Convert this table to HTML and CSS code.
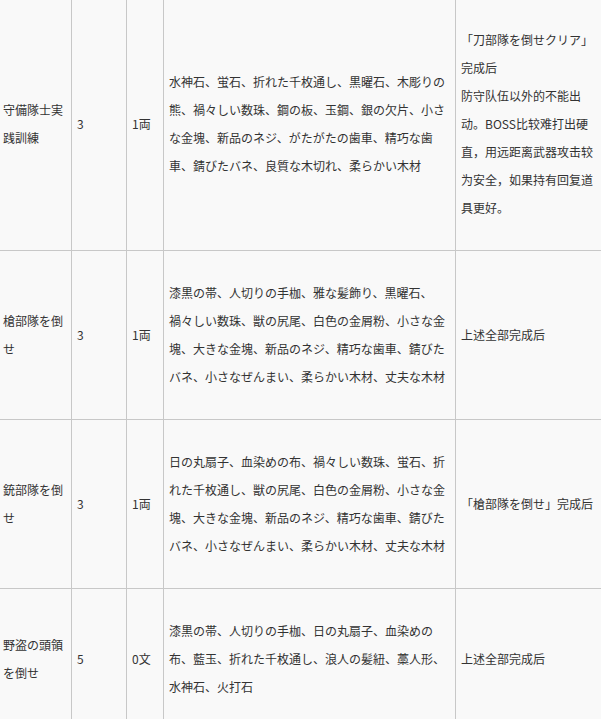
FILE: index.html
```html
<!DOCTYPE html>
<html lang="ja">
<head>
<meta charset="utf-8">
<title>任務一覧</title>
<link rel="stylesheet" href="styles.css">
</head>
<body>
<table class="quests">
  <colgroup>
    <col class="c-name">
    <col class="c-num">
    <col class="c-cost">
    <col class="c-mat">
    <col class="c-cond">
  </colgroup>
  <tbody>
    <tr>
      <td>守備隊士実践訓練</td>
      <td>3</td>
      <td>1両</td>
      <td>水神石、蛍石、折れた千枚通し、黒曜石、木彫りの熊、禍々しい数珠、鋼の板、玉鋼、銀の欠片、小さな金塊、新品のネジ、がたがたの歯車、精巧な歯車、錆びたバネ、良質な木切れ、柔らかい木材</td>
      <td lang="zh-CN">「刀部隊を倒せクリア」完成后<br>防守队伍以外的不能出动。BOSS比较难打出硬直，用远距离武器攻击较为安全，如果持有回复道具更好。</td>
    </tr>
    <tr>
      <td>槍部隊を倒せ</td>
      <td>3</td>
      <td>1両</td>
      <td>漆黒の帯、人切りの手枷、雅な髪飾り、黒曜石、禍々しい数珠、獣の尻尾、白色の金屑粉、小さな金塊、大きな金塊、新品のネジ、精巧な歯車、錆びたバネ、小さなぜんまい、柔らかい木材、丈夫な木材</td>
      <td lang="zh-CN">上述全部完成后</td>
    </tr>
    <tr>
      <td>銃部隊を倒せ</td>
      <td>3</td>
      <td>1両</td>
      <td>日の丸扇子、血染めの布、禍々しい数珠、蛍石、折れた千枚通し、獣の尻尾、白色の金屑粉、小さな金塊、大きな金塊、新品のネジ、精巧な歯車、錆びたバネ、小さなぜんまい、柔らかい木材、丈夫な木材</td>
      <td lang="zh-CN">「槍部隊を倒せ」完成后</td>
    </tr>
    <tr>
      <td>野盗の頭領を倒せ</td>
      <td>5</td>
      <td>0文</td>
      <td>漆黒の帯、人切りの手枷、日の丸扇子、血染めの布、藍玉、折れた千枚通し、浪人の髪紐、藁人形、水神石、火打石</td>
      <td lang="zh-CN">上述全部完成后</td>
    </tr>
  </tbody>
</table>
</body>
</html>
```

FILE: styles.css
```css
html, body {
  margin: 0;
  padding: 0;
  background: #f9f9f9;
}

body {
  font-family: "Noto Sans CJK JP", "Noto Sans", sans-serif;
  font-size: 12px;
  color: #333;
  overflow: hidden;
}

.quests {
  border-collapse: collapse;
  table-layout: fixed;
  width: 606px;
  margin: -3px 0 0 -3px;
  background: #f9f9f9;
}

.c-name { width: 74px; }
.c-num  { width: 55px; }
.c-cost { width: 37px; }
.c-mat  { width: 292px; }
.c-cond { width: 148px; }

.quests td {
  border: 1px solid #c8c8c8;
  padding: 28px 5px;
  line-height: 28px;
  vertical-align: middle;
  text-align: left;
  word-break: normal;
  line-break: strict;
}

.quests td:lang(zh-CN) {
  font-family: "Noto Sans CJK SC", "Noto Sans CJK JP", sans-serif;
}
```
